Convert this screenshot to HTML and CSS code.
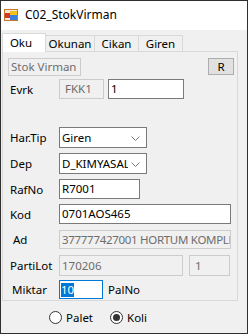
FILE: index.html
```html
<!DOCTYPE html>
<html>
<head>
<meta charset="utf-8">
<link rel="stylesheet" href="styles.css">
</head>
<body>
<div class="window">
  <div class="titlebar">
    <svg class="appicon" width="14" height="12" viewBox="0 0 14 12">
      <rect x="0.5" y="0.5" width="13" height="11" fill="#f4e9d8" stroke="#c8742a"/>
      <rect x="1" y="4" width="5" height="5" fill="#d9342b"/>
      <rect x="6" y="2" width="7" height="4" fill="#f2c21b"/>
      <rect x="6" y="6" width="7" height="5" fill="#3c7fd6"/>
    </svg>
    <span class="title">C02_StokVirman</span>
  </div>
  <div class="body">
    <div class="tabs">
      <div class="tab sel">Oku</div>
      <div class="tab w-okunan">Okunan</div>
      <div class="tab w-cikan">Cikan</div>
      <div class="tab w-giren">Giren</div>
    </div>
    <div class="page">
      <div class="row r1">
        <div class="box dis w-stok">Stok Virman</div>
        <div class="btn">R</div>
      </div>
      <div class="row r2">
        <span class="lbl">Evrk</span>
        <div class="box dis w-fkk">FKK1</div>
        <div class="box w-evno">1</div>
      </div>
      <div class="row r3">
        <span class="lbl">Har.Tip</span>
        <div class="box combo w-combo">Giren<svg class="chev" width="9" height="5" viewBox="0 0 9 5"><path d="M0.5 0.5 L4.5 4.5 L8.5 0.5" fill="none" stroke="#7a7a7a"/></svg></div>
      </div>
      <div class="row r4">
        <span class="lbl">Dep</span>
        <div class="box combo w-combo"><span class="clip">D_KIMYASAL</span><svg class="chev" width="9" height="5" viewBox="0 0 9 5"><path d="M0.5 0.5 L4.5 4.5 L8.5 0.5" fill="none" stroke="#7a7a7a"/></svg></div>
      </div>
      <div class="row r5">
        <span class="lbl">RafNo</span>
        <div class="box w-raf">R7001</div>
      </div>
      <div class="row r6">
        <span class="lbl">Kod</span>
        <div class="box w-kod">0701AOS465</div>
      </div>
      <div class="row r7">
        <span class="lbl ad">Ad</span>
        <div class="box dis w-kod"><span class="clip tight">377777427001 HORTUM KOMPLE</span></div>
      </div>
      <div class="row r8">
        <span class="lbl">PartiLot</span>
        <div class="box dis w-lot">170206</div>
        <div class="box dis w-lot2">1</div>
      </div>
      <div class="row r9">
        <span class="lbl mik">Miktar</span>
        <div class="box focus w-mik"><span class="selection">10</span></div>
        <span class="lbl2">PalNo</span>
      </div>
    </div>
    <div class="radios">
      <label class="radio"><span class="circle"></span>Palet</label>
      <label class="radio"><span class="circle on"></span>Koli</label>
    </div>
  </div>
</div>
</body>
</html>
```
FILE: styles.css
```css
html, body {
  margin: 0;
  padding: 0;
  background: #ffffff;
}
body {
  font-family: "Noto Sans", "DejaVu Sans", sans-serif;
  font-size: 11.5px;
  color: #000;
}
.window {
  width: 246px;
  height: 332px;
  border: 1px solid #2f2f2f;
  background: #f0f0f0;
  overflow: hidden;
}
.titlebar {
  height: 29px;
  background: #ffffff;
  display: flex;
  align-items: center;
  padding-left: 3px;
  padding-bottom: 2px;
  box-sizing: border-box;
}
.appicon {
  display: block;
  margin-right: 7px;
}
.title {
  font-size: 12px;
  line-height: 14px;
}
.body {
  padding-left: 1px;
}
.tabs {
  display: flex;
  align-items: flex-end;
  height: 18px;
  margin-top: 3px;
  position: relative;
  z-index: 1;
}
.tab {
  height: 16px;
  line-height: 15px;
  box-sizing: border-box;
  border: 1px solid #d9d9d9;
  border-bottom: none;
  border-left: none;
  background: #f0f0f0;
  text-align: center;
}
.tab.sel {
  width: 44px;
  height: 19px;
  margin-bottom: -1px;
  background: #ffffff;
  border-left: 1px solid #d9d9d9;
  line-height: 17px;
  padding-right: 6px;
}
.w-okunan { width: 49px; }
.w-cikan { width: 44px; }
.w-giren { width: 44px; }
.page {
  width: 236px;
  height: 250px;
  box-sizing: border-box;
  border: 1px solid #d9d9d9;
  background: #f0f0f0;
  padding-left: 5px;
  padding-top: 6px;
}
.row {
  display: flex;
  align-items: center;
}
.lbl {
  width: 51px;
  padding-left: 2px;
  box-sizing: border-box;
  white-space: nowrap;
}
.lbl.ad { padding-left: 5px; }
.lbl.mik { padding-left: 4px; }
.lbl2 {
  margin-left: 5px;
}
.box {
  box-sizing: border-box;
  border: 1px solid #7a7a7a;
  background: #ffffff;
  height: 20px;
  line-height: 18px;
  padding-left: 2px;
  white-space: nowrap;
  overflow: hidden;
  position: relative;
}
.box.dis {
  border-color: #cccccc;
  background: #f0f0f0;
  color: #6d6d6d;
}
.box.focus {
  border-color: #0078d7;
}
.selection {
  background: #0078d7;
  color: #ffffff;
  display: inline-block;
  line-height: 14px;
}
.clip {
  display: block;
  overflow: hidden;
  white-space: nowrap;
}
.tight {
  letter-spacing: -0.3px;
}
.combo {
  height: 21px;
  line-height: 19px;
  padding-right: 18px;
}
.chev {
  position: absolute;
  right: 6px;
  top: 8px;
}
.btn {
  width: 26px;
  height: 17px;
  box-sizing: border-box;
  border: 1px solid #adadad;
  background: #e1e1e1;
  text-align: center;
  line-height: 15px;
  margin-left: auto;
  margin-right: 3px;
  align-self: flex-start;
}
.r1 .box { height: 18px; line-height: 16px; }
.w-stok { width: 73px; padding-left: 2px; }
.r2 { margin-top: 3px; }
.w-fkk { width: 45px; padding-left: 5px; }
.w-evno { width: 76px; margin-left: 4px; }
.r3 { margin-top: 28px; }
.w-combo { width: 88px; }
.r4 { margin-top: 5px; }
.r5 { margin-top: 5px; }
.w-raf { width: 81px; }
.r6 { margin-top: 5px; }
.w-kod { width: 172px; }
.r7 { margin-top: 6px; }
.r7 .box { height: 19px; line-height: 17px; }
.r8 { margin-top: 6px; }
.r8 .box { height: 21px; line-height: 19px; }
.w-lot { width: 124px; }
.w-lot2 { width: 41px; margin-left: 6px; padding-left: 5px; }
.r9 { margin-top: 4px; }
.w-mik { width: 44px; height: 19px; line-height: 17px; padding-left: 1px; }
.radios {
  display: flex;
  align-items: center;
  height: 32px;
  padding-left: 47px;
  padding-top: 1px;
  box-sizing: border-box;
}
.radio {
  display: flex;
  align-items: center;
  margin-right: 17px;
}
.circle {
  width: 13px;
  height: 13px;
  box-sizing: border-box;
  border: 1px solid #333333;
  border-radius: 50%;
  background: #ffffff;
  margin-right: 4px;
  display: flex;
  align-items: center;
  justify-content: center;
}
.circle.on::after {
  content: "";
  width: 7px;
  height: 7px;
  border-radius: 50%;
  background: #333333;
}
```
